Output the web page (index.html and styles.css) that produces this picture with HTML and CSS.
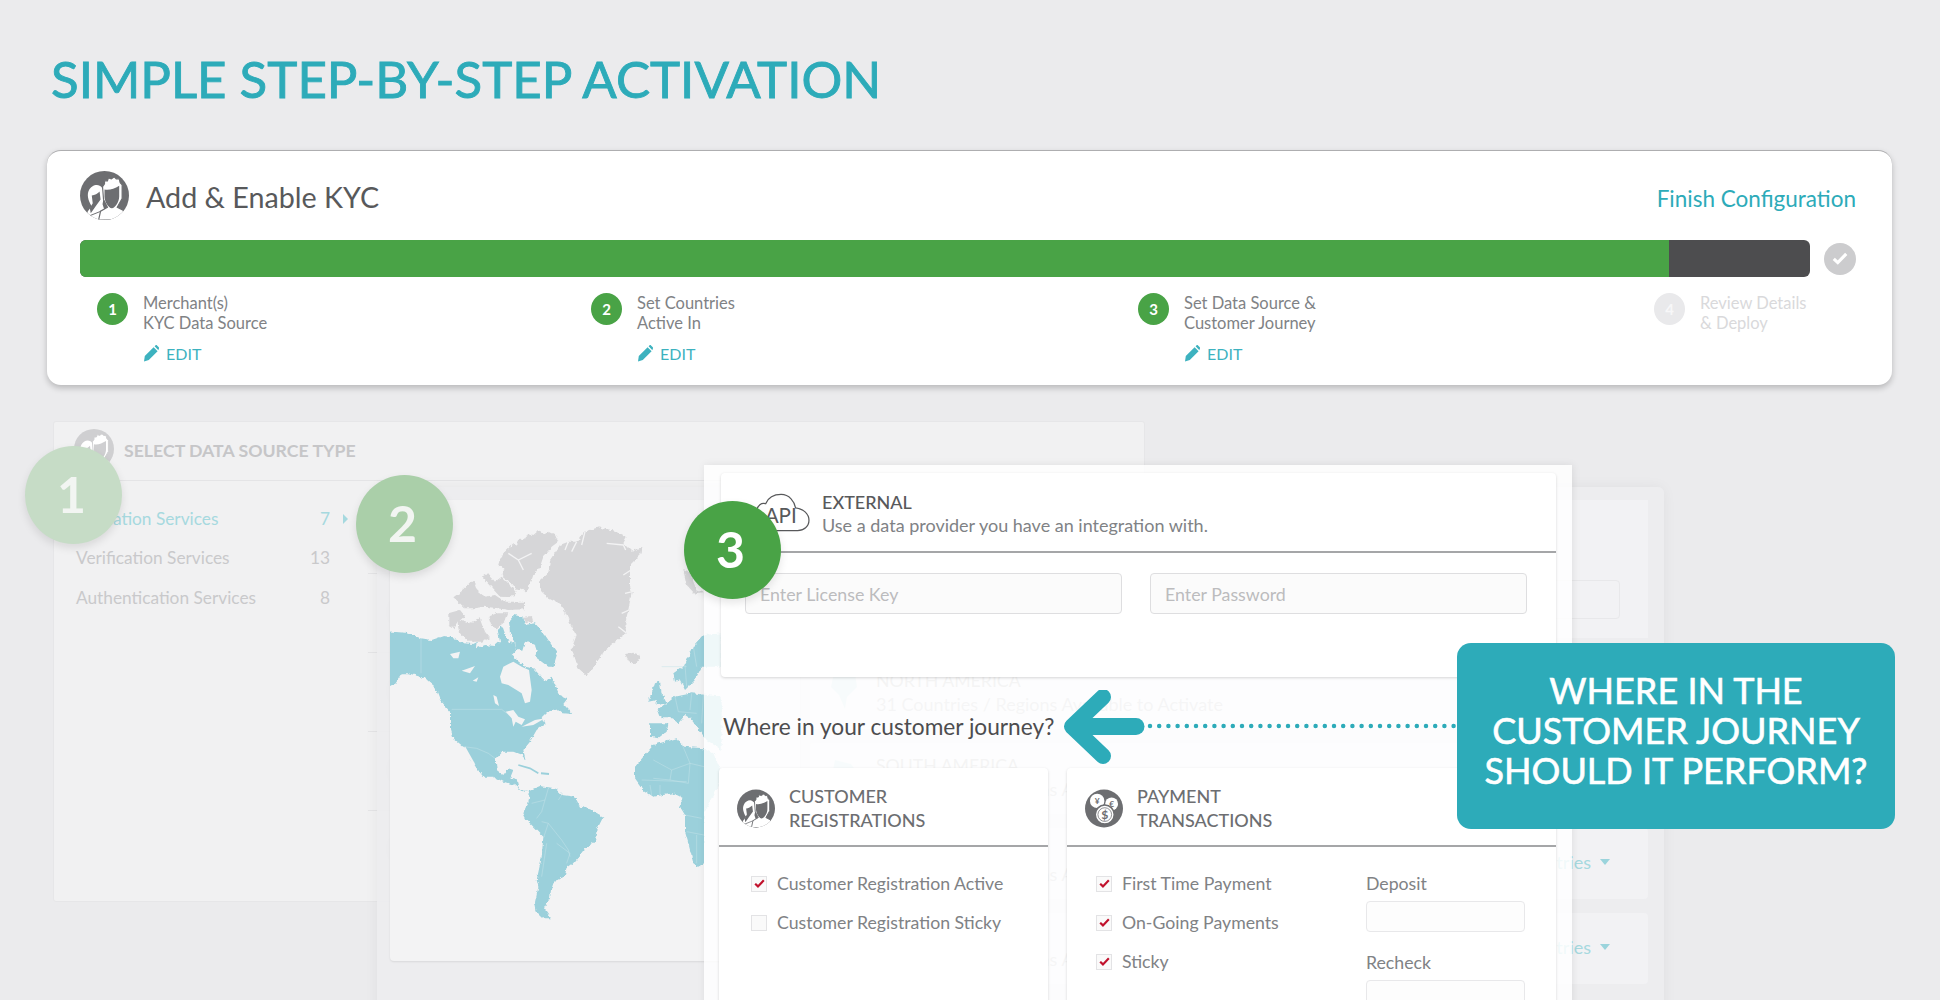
FILE: index.html
```html
<!DOCTYPE html>
<html lang="en">
<head>
<meta charset="utf-8">
<title>Simple Step-by-Step Activation</title>
<link rel="stylesheet" href="styles.css">
</head>
<body>
<svg class="defs" width="0" height="0" aria-hidden="true">
  <defs>
    <clipPath id="disc"><circle cx="25" cy="25" r="25"/></clipPath>
    <filter id="rough" x="-5%" y="-5%" width="110%" height="110%">
      <feTurbulence type="fractalNoise" baseFrequency=".07" numOctaves="3" seed="4"/>
      <feDisplacementMap in="SourceGraphic" scale="13" xChannelSelector="R" yChannelSelector="G"/>
    </filter>
    <symbol id="people" viewBox="0 0 50 50">
      <circle cx="25" cy="25" r="25" fill="currentColor"/>
      <g clip-path="url(#disc)">
        <path fill="#fff" d="M5 50 L8 41 L12 36 C8 30 7 24 9 20 C11 15 17 13 20 15 C24 17 25 22 24 28 L23 34 L25 40 L26 50 Z"/>
        <path fill="currentColor" d="M12 25 C15 25 18 23 20 21 L21 29 L16 36 L11 43 L10 38 L13 33 Z"/>
        <path fill="none" stroke="currentColor" stroke-width="1" d="M9 46 L24 40"/>
        <path fill="#fff" stroke="currentColor" stroke-width="1.200" d="M19 50 L21 41 L28 37 L24 29 L23 16 L25 13 L25 10 L28 10 L29 7 L32 8 L35 6 L37 8 L40 8 L41 12 L43 14 L43 28 L38 37 L44 40 L47 50 Z"/>
        <path fill="currentColor" d="M25 19 C30 20 35 18 40 15 L40 26 C40 31 36 38 32.500 38 C29 38 25 31 25 26 Z"/>
      </g>
    </symbol>
    <symbol id="coins" viewBox="0 0 50 50">
      <circle cx="25" cy="25" r="25" fill="currentColor"/>
      <circle cx="16" cy="15" r="9.500" fill="#fff"/>
      <circle cx="35" cy="19" r="8.500" fill="#fff"/>
      <circle cx="26" cy="33" r="12.500" fill="#fff" stroke="currentColor" stroke-width="2"/>
      <circle cx="26" cy="33" r="9" fill="none" stroke="currentColor" stroke-width="1"/>
      <text class="coin-small" x="16" y="19">¥</text>
      <text class="coin-small" x="35" y="23">€</text>
      <text class="coin-big" x="26" y="38.500">$</text>
    </symbol>
    <symbol id="pencil" viewBox="0 0 16 17">
      <path d="M1 16.500 L1.800 11 L10.600 2.200 L14.600 6.200 L5.800 15 Z M11.600 1.200 L12.400 .4 C13 0 13.600 0 14 .4 L15.800 2.200 C16.200 2.800 16.200 3.400 15.800 3.800 L15.400 5.200 Z" fill="currentColor"/>
    </symbol>
    <symbol id="tick" viewBox="0 0 12 10">
      <path d="M1.200 5.200 L4.300 8.200 L10.800 1.400" fill="none" stroke="currentColor" stroke-width="2.400"/>
    </symbol>
  </defs>
</svg>

<main class="page">
  <h1 class="page-title">SIMPLE STEP-BY-STEP ACTIVATION</h1>

  <section class="enable-card">
    <header class="enable-head">
      <svg class="icon-lg"><use href="#people"/></svg>
      <h2 class="enable-title">Add &amp; Enable KYC</h2>
      <a class="finish-link">Finish Configuration</a>
    </header>
    <div class="progress-row">
      <div class="progress">
        <div class="progress-done"></div>
      </div>
      <span class="progress-check"><svg class="progress-tick"><use href="#tick"/></svg></span>
    </div>
    <ol class="steps">
      <li class="step">
        <span class="step-num">1</span>
        <div class="step-text">
          <p class="step-label">Merchant(s)<br>KYC Data Source</p>
          <a class="step-edit"><svg class="pencil"><use href="#pencil"/></svg>EDIT</a>
        </div>
      </li>
      <li class="step">
        <span class="step-num">2</span>
        <div class="step-text">
          <p class="step-label">Set Countries<br>Active In</p>
          <a class="step-edit"><svg class="pencil"><use href="#pencil"/></svg>EDIT</a>
        </div>
      </li>
      <li class="step">
        <span class="step-num">3</span>
        <div class="step-text">
          <p class="step-label">Set Data Source &amp;<br>Customer Journey</p>
          <a class="step-edit"><svg class="pencil"><use href="#pencil"/></svg>EDIT</a>
        </div>
      </li>
      <li class="step step-off">
        <span class="step-num">4</span>
        <div class="step-text">
          <p class="step-label">Review Details<br>&amp; Deploy</p>
        </div>
      </li>
    </ol>
  </section>

  <section class="window window-one">
    <header class="one-head">
      <svg class="icon-faint"><use href="#people"/></svg>
      <h3 class="one-title">SELECT DATA SOURCE TYPE</h3>
    </header>
    <div class="one-body">
      <ul class="source-list">
        <li class="source source-on"><span>Validation Services</span><span class="source-count">7</span><i class="source-arrow"></i></li>
        <li class="source"><span>Verification Services</span><span class="source-count">13</span></li>
        <li class="source"><span>Authentication Services</span><span class="source-count">8</span></li>
      </ul>
      <ul class="ghost-list">
        <li class="ghost-row"><i class="ghost-disc"></i></li>
        <li class="ghost-row"><i class="ghost-disc"></i></li>
        <li class="ghost-row"><i class="ghost-disc"></i></li>
        <li class="ghost-row"><i class="ghost-disc"></i></li>
      </ul>
    </div>
  </section>

  <section class="window window-two">
    <div class="map-card">
      <svg class="map" viewBox="15 -30 1230 1383" width="410" height="461" aria-hidden="true">
        <g class="land-grey">
          <path d="M462 215 L490 190 L495 150 L525 105 L550 95 L575 95 L600 65 L640 52 L690 62 L725 80 L715 100 L740 125 L772 110 L770 130 L735 165 L735 230 L740 245 L730 300 L720 340 L725 370 L690 395 L660 420 L630 465 L605 497 L580 475 L560 415 L575 375 L555 340 L530 285 L490 265 L465 240 Z"/>
          <path d="M365 120 L385 100 L395 105 L405 85 L420 90 L430 70 L445 75 L460 62 L475 70 L490 65 L510 75 L520 95 L500 110 L490 125 L475 140 L465 170 L445 195 L440 210 L430 225 L425 250 L410 235 L395 240 L385 225 L375 215 L360 205 L350 195 L355 175 L340 165 L345 145 L355 130 Z"/>
          <path d="M290 200 L310 190 L330 215 L350 200 L375 225 L395 245 L380 262 L345 260 Z"/>
          <path d="M205 262 L235 240 L265 210 L275 240 L300 260 L330 255 L360 275 L420 275 L420 298 L370 300 L340 295 L300 290 L270 295 L240 295 L220 275 Z"/>
          <path d="M220 330 L250 340 L285 325 L300 365 L315 385 L290 395 L250 395 L225 370 Z"/>
          <path d="M190 310 L225 300 L240 318 L215 340 L205 355 L190 345 Z"/>
          <path d="M310 320 L335 310 L370 310 L360 335 L335 355 L318 345 Z"/>
          <path d="M415 320 L440 318 L445 335 L422 340 Z"/>
          <path d="M720 432 L745 428 L768 435 L755 458 L735 460 Z"/>
          <path d="M895 180 L915 190 L935 240 L957 250 L930 252 L905 225 Z"/>
        </g>
        <path class="fjord" d="M370 130 L400 150 L440 130 M400 150 L415 180 M550 95 L540 120 M575 95 L560 125 M600 65 L590 105 M665 100 L715 105 L722 120 M738 180 L715 195 M742 245 L720 250 M732 300 L710 310 M725 370 L700 350"/>
        <g class="land-teal">
          <path d="M-15 362 L60 368 L108 385 L140 390 L175 378 L205 382 L235 400 L265 402 L278 395 L276 415 L300 405 L330 408 L345 395 L338 360 L352 348 L365 385 L372 400 L388 395 L395 420 L380 435 L395 450 L420 470 L445 475 L480 512 L500 500 L525 555 L548 565 L535 582 L562 612 L535 610 L520 598 L490 605 L470 625 L482 640 L455 660 L435 695 L415 720 L422 750 L410 735 L385 725 L350 725 L332 745 L335 780 L355 795 L370 775 L385 780 L375 805 L395 810 L400 830 L420 845 L435 840 L465 828 L510 835 L530 855 L570 860 L585 890 L615 898 L655 920 L635 960 L630 995 L600 1015 L585 1035 L565 1060 L545 1075 L540 1095 L507 1115 L498 1140 L495 1165 L477 1195 L498 1225 L475 1225 L455 1205 L450 1180 L460 1130 L455 1110 L470 1040 L475 980 L425 930 L415 910 L430 880 L435 840 L415 845 L390 825 L355 815 L325 800 L295 800 L275 775 L255 745 L235 710 L205 685 L195 650 L195 605 L165 570 L150 530 L120 505 L70 490 L50 490 L30 520 L-15 545 Z"/>
          <path d="M372 330 L385 315 L415 320 L420 345 L450 340 L480 375 L500 405 L517 430 L505 470 L490 470 L450 440 L455 420 L440 400 L420 395 L412 422 L395 420 L390 400 L375 370 Z"/>
          <path d="M865 490 L900 465 L925 410 L957 375 L1010 370 L1010 470 L950 470 L930 510 L900 540 L885 510 L870 515 Z"/>
          <path d="M810 520 L825 515 L830 550 L845 580 L815 585 L815 570 L790 575 L800 550 Z"/>
          <path d="M820 600 L870 560 L920 550 L1010 560 L1010 720 L965 690 L935 650 L915 625 L900 615 L880 640 L860 625 L830 625 Z"/>
          <path d="M795 640 L850 640 L845 665 L820 685 L795 680 Z"/>
          <path d="M750 770 L775 740 L805 705 L875 685 L895 710 L957 715 L985 730 L1015 800 L985 860 L957 910 L957 1060 L940 1070 L925 1060 L910 1000 L900 965 L900 915 L885 890 L895 865 L865 850 L805 860 L775 840 L750 805 Z"/>
        </g>
        <path class="islands" d="M400 765 L435 775 L460 790"/>
        <path class="islands islands-thin" d="M468 790 L492 792"/>
        <g class="water">
          <path d="M345 500 L355 470 L385 455 L410 470 L432 480 L440 540 L435 575 L420 580 L410 550 L370 525 L350 520 Z"/>
          <circle cx="443" cy="410" r="8"/>
          <path d="M362 605 L385 600 L400 620 L420 628 L410 645 L392 635 L385 650 L380 625 Z"/>
          <path d="M195 432 L225 425 L220 445 L205 445 Z M230 482 L270 468 L255 490 Z M263 512 L280 502 L275 515 Z M325 555 L335 560 L342 588 L330 580 Z"/>
          <path d="M410 650 L450 630 L480 625 L445 645 Z"/>
        </g>
        <path class="border-lines" d="M200 598 L350 598 L365 610 M108 385 L108 490 M235 710 L275 715 L310 730 L330 745 M490 835 L480 870 L440 880 M480 870 L470 905 L455 925 M470 935 L490 940 L530 990 L550 1020 L555 1040 M530 855 L520 870 M475 985 L490 940 M485 1000 L470 1100 M515 1000 L555 1030 L545 1060 M805 750 L860 780 L855 810 L805 805 M860 780 L915 760 L957 770 M915 760 L890 700 M855 810 L910 820 L915 760 M770 810 L905 815 M795 825 L800 855 M825 825 L825 855 M900 915 L950 925 M905 965 L957 975 M935 975 L935 1060 M870 560 L880 605 L935 610 M920 550 L915 600 M955 555 L950 640 M830 470 L905 470 M900 465 L905 530 M925 410 L935 470"/>
        <path class="gulf" d="M238 712 L268 765"/>
      </svg>
    </div>
    <div class="regions">
      <div class="region-top"><span class="region-field"></span></div>
      <div class="region">
        <svg class="region-map" viewBox="0 0 30 40"><path d="M4 6 L26 2 L28 16 L18 26 L16 38 L10 24 L2 16 Z"/></svg>
        <div class="region-text"><p class="region-name">NORTH AMERICA</p><p class="region-desc">31 Countries / Regions Available to Activate</p></div>
        <span class="region-action">View Countries<i class="caret"></i></span>
      </div>
      <div class="region">
        <svg class="region-map" viewBox="0 0 30 40"><path d="M6 4 L22 8 L28 16 L18 28 L14 38 L12 24 L4 14 Z"/></svg>
        <div class="region-text"><p class="region-name">SOUTH AMERICA</p><p class="region-desc">13 Countries / Regions Available to Activate</p></div>
        <span class="region-action">View Countries<i class="caret"></i></span>
      </div>
      <div class="region">
        <svg class="region-map" viewBox="0 0 30 40"><path d="M6 6 L24 4 L28 16 L16 22 L10 36 L4 20 Z"/></svg>
        <div class="region-text"><p class="region-name">EUROPE</p><p class="region-desc">44 Countries / Regions Available to Activate</p></div>
        <span class="region-action">View Countries<i class="caret"></i></span>
      </div>
      <div class="region">
        <svg class="region-map" viewBox="0 0 30 40"><path d="M4 8 L22 4 L28 18 L20 36 L14 24 L4 18 Z"/></svg>
        <div class="region-text"><p class="region-name">AFRICA</p><p class="region-desc">54 Countries / Regions Available to Activate</p></div>
        <span class="region-action">View Countries<i class="caret"></i></span>
      </div>
    </div>
  </section>

  <section class="window window-three">
    <div class="white-card external">
      <header class="external-head">
        <svg class="cloud" viewBox="0 0 64 38" aria-hidden="true">
          <path d="M12 36 C4 36 1 30 2 25 C3 19 8 17 12 18 C13 11 17 9 21 10 C24 3 30 1 36 1 C44 1 49 8 50 14 C58 15 63 20 63 26 C63 32 58 36 52 36 Z"/>
          <text class="cloud-text" x="20" y="29">API</text>
        </svg>
        <div>
          <h4 class="external-title">EXTERNAL</h4>
          <p class="external-desc">Use a data provider you have an integration with.</p>
        </div>
      </header>
      <form class="external-form">
        <input class="text-field" type="text" placeholder="Enter License Key">
        <input class="text-field" type="text" placeholder="Enter Password">
      </form>
    </div>

    <p class="journey-question">Where in your customer journey?</p>

    <div class="journey-grid">
      <div class="white-card journey-card">
        <header class="journey-head">
          <svg class="icon-md"><use href="#people"/></svg>
          <h4 class="journey-title">CUSTOMER<br>REGISTRATIONS</h4>
        </header>
        <ul class="check-list check-list-one">
          <li class="check-row"><span class="check-box"><svg class="check-mark"><use href="#tick"/></svg></span>Customer Registration Active</li>
          <li class="check-row"><span class="check-box"></span>Customer Registration Sticky</li>
        </ul>
      </div>
      <div class="white-card journey-card">
        <header class="journey-head">
          <svg class="icon-md"><use href="#coins"/></svg>
          <h4 class="journey-title">PAYMENT<br>TRANSACTIONS</h4>
        </header>
        <div class="payment-body">
          <ul class="check-list">
            <li class="check-row"><span class="check-box"><svg class="check-mark"><use href="#tick"/></svg></span>First Time Payment</li>
            <li class="check-row"><span class="check-box"><svg class="check-mark"><use href="#tick"/></svg></span>On-Going Payments</li>
            <li class="check-row"><span class="check-box"><svg class="check-mark"><use href="#tick"/></svg></span>Sticky</li>
          </ul>
          <div class="payment-fields">
            <label class="field-label">Deposit</label>
            <span class="small-field"></span>
            <label class="field-label field-label-next">Recheck</label>
            <span class="small-field"></span>
          </div>
        </div>
      </div>
    </div>
  </section>

  <span class="badge badge-one">1</span>
  <span class="badge badge-two">2</span>
  <span class="badge badge-three">3</span>

  <svg class="pointer" viewBox="0 0 400 76" width="400" height="76" aria-hidden="true">
    <path class="pointer-head" d="M43 7 L12 36.500 L43 66"/>
    <path class="pointer-shaft" d="M16 36.500 L76 36.500"/>
    <path class="pointer-dots" d="M90 36 L396 36"/>
  </svg>

  <aside class="callout">WHERE IN THE<br>CUSTOMER JOURNEY<br>SHOULD IT PERFORM?</aside>
</main>
</body>
</html>
```

FILE: styles.css
```css
* { box-sizing: border-box; }

html, body {
  margin: 0;
  padding: 0;
  background: #ebebed;
}

body {
  font-family: Lato, "Open Sans", sans-serif;
  color: #808285;
  overflow: hidden;
}

p, h1, h2, h3, h4, ul, ol { margin: 0; padding: 0; }
ul, ol { list-style: none; }
a { color: inherit; }

.defs { position: absolute; }

.page {
  position: relative;
  width: 1940px;
  height: 1000px;
  overflow: hidden;
}

.page-title {
  padding: 47px 0 0 51px;
  height: 150px;
  font-size: 51px;
  line-height: 64px;
  font-weight: 400;
  color: #2dabb9;
  -webkit-text-stroke: .9px #2dabb9;
}

/* Top card */
.enable-card {
  position: relative;
  z-index: 5;
  margin-left: 47px;
  width: 1845px;
  height: 235px;
  padding: 20px 36px 0 33px;
  background: #fff;
  border-top: 1px solid #aeaeb0;
  border-radius: 14px;
  box-shadow: 0 3px 6px rgba(0, 0, 0, .22);
}

.enable-head {
  display: flex;
  align-items: center;
  height: 48px;
  gap: 17px;
}

.icon-lg { width: 49px; height: 49px; color: #6d6e71; flex: none; }

.enable-title {
  margin-top: 4px;
  font-size: 28.700px;
  font-weight: 400;
  color: #58595b;
}

.finish-link {
  margin-left: auto;
  margin-top: 6px;
  font-size: 22.500px;
  color: #2dabb9;
}

.progress-row {
  display: flex;
  align-items: center;
  gap: 14px;
  margin-top: 21px;
}

.progress {
  width: 1735px;
  height: 37px;
  background: #4d4d4f;
  border-radius: 6px;
  overflow: hidden;
}

.progress-done {
  width: 1589px;
  height: 100%;
  background: #49a346;
}

.progress-check {
  display: flex;
  align-items: center;
  justify-content: center;
  width: 32px;
  height: 32px;
  border-radius: 50%;
  background: #ccccce;
  color: #fff;
}

.progress-tick { width: 16px; height: 13px; }

.steps {
  display: grid;
  grid-template-columns: 494px 547px 516px 1fr;
  margin-top: 16px;
  padding-left: 17px;
}

.step { display: flex; gap: 15px; }

.step-num {
  flex: none;
  display: flex;
  align-items: center;
  justify-content: center;
  width: 31px;
  height: 32px;
  border-radius: 50%;
  background: #49a346;
  color: #fff;
  font-size: 15px;
  font-weight: 700;
}

.step-label {
  font-size: 16.500px;
  line-height: 20px;
  color: #808285;
}

.step-edit {
  display: flex;
  align-items: center;
  gap: 7px;
  margin-top: 10px;
  height: 20px;
  font-size: 16px;
  color: #3db2bf;
}

.pencil { width: 16px; height: 17px; }

.step-off .step-num { background: #e9e9eb; color: #f7f7f8; }
.step-off .step-label { color: #d9d9db; }

/* Layered windows, placed on the page like windows on a desktop */
.window { position: absolute; }

.window-one {
  z-index: 1;
  left: 53px;
  top: 421px;
  width: 1092px;
  height: 481px;
  background: #f1f1f2;
  border: 1px solid #e6e6e8;
  border-radius: 3px;
}

.one-head {
  display: flex;
  align-items: center;
  gap: 10px;
  height: 59px;
  padding: 0 0 0 20px;
  border-bottom: 1px solid #e4e4e6;
}

.icon-faint { width: 40px; height: 40px; color: #cfcfd1; margin-top: -4px; }

.one-title {
  margin-top: -2px;
  font-size: 17.700px;
  font-weight: 700;
  color: #c6c6c8;
}

.one-body {
  display: flex;
  padding-left: 22px;
}

.source-list {
  position: relative;
  width: 292px;
  padding-top: 18px;
}

.source {
  position: relative;
  display: flex;
  align-items: center;
  height: 39.300px;
  padding-right: 38px;
  font-size: 17.300px;
  color: #c9c9cb;
}

.source-count { margin-left: auto; width: 30px; text-align: right; }
.source-on { color: #a6d9df; }

.source-arrow {
  position: absolute;
  right: 20px;
  border-left: 5px solid #a6d9df;
  border-top: 5px solid transparent;
  border-bottom: 5px solid transparent;
}

.ghost-list {
  flex: 1;
  margin-top: 92px;
}

.ghost-row {
  height: 79px;
  padding: 18px 0 0 18px;
  border-top: 1px solid #e4e4e6;
}

.ghost-disc {
  display: block;
  width: 40px;
  height: 40px;
  border-radius: 50%;
  background: #dcdcde;
}

.window-two {
  z-index: 2;
  left: 377px;
  top: 487px;
  width: 1287px;
  height: 540px;
  display: flex;
  gap: 10px;
  padding: 13px 16px 0 13px;
  background: rgba(237, 237, 239, .92);
  border-radius: 6px;
  box-shadow: 0 0 14px rgba(0, 0, 0, .05);
}

.map-card {
  flex: none;
  width: 410px;
  height: 461px;
  background: #f3f3f4;
  border-radius: 4px;
  box-shadow: 0 1px 2px rgba(0, 0, 0, .09);
  overflow: hidden;
}

.map { display: block; }
.land-grey { fill: #d6d6d8; filter: url(#rough); }
.land-teal { fill: #9bd0db; filter: url(#rough); }
.water { fill: #f3f3f4; }

.fjord, .border-lines, .gulf {
  fill: none;
  stroke: #f3f3f4;
}
.fjord { stroke-width: 4; }
.border-lines { stroke-width: 1.500; stroke: #c5e3e9; }
.gulf { stroke-width: 7; }

.islands { fill: none; stroke: #9bd0db; stroke-width: 5; }
.islands-thin { stroke-width: 6; }

.regions {
  flex: 1;
  display: flex;
  flex-direction: column;
  gap: 14px;
}

.region-top {
  display: flex;
  align-items: flex-end;
  justify-content: flex-end;
  height: 144px;
  padding: 0 28px 25px 0;
  background: linear-gradient(#f2f2f4, #f2f2f4) top / 100% 138px no-repeat;
}

.region-field {
  display: block;
  width: 420px;
  height: 39px;
  border: 1px solid #e8e8ea;
  border-radius: 4px;
}

.region {
  display: flex;
  align-items: flex-start;
  height: 71px;
  padding: 13px 38px 0 19px;
  background: #f2f2f4;
  border-radius: 4px;
}

.region-map { width: 30px; height: 40px; fill: #cfe6ea; margin-right: 17px; flex: none; }
.region-name { font-size: 17.700px; line-height: 20px; color: #b8b8ba; }
.region-desc { font-size: 18px; line-height: 26px; color: #c2c2c4; }

.region-action {
  display: flex;
  align-items: center;
  gap: 9px;
  margin-left: auto;
  margin-top: 10px;
  font-size: 18px;
  color: #a6d9df;
}

.caret {
  border-top: 6px solid #9bd4dc;
  border-left: 5.500px solid transparent;
  border-right: 5.500px solid transparent;
}

.window-three {
  z-index: 3;
  left: 704px;
  top: 465px;
  width: 868px;
  height: 560px;
  padding: 8px 16px 0 17px;
  background: rgba(255, 255, 255, .84);
  box-shadow: 1px 0 8px rgba(0, 0, 0, .08);
}

.white-card {
  background: #fff;
  border-radius: 4px;
  box-shadow: 0 1px 3px rgba(0, 0, 0, .16);
}

.external { height: 204px; }

.external-head {
  display: flex;
  align-items: center;
  gap: 12px;
  height: 80px;
  padding: 0 0 0 23px;
  border-bottom: 2px solid #a5a6a8;
}

.cloud {
  flex: none;
  width: 66px;
  height: 40px;
  margin-top: 2px;
  fill: none;
  stroke: #58595b;
  stroke-width: 1.200;
  overflow: visible;
}

.cloud-text {
  font-size: 20px;
  font-weight: 400;
  fill: #58595b;
  stroke: none;
}

.external-head > div { margin-top: 3px; }

.external-title {
  font-size: 18px;
  line-height: 23px;
  font-weight: 500;
  color: #58595b;
}

.external-desc {
  font-size: 18px;
  line-height: 23px;
  color: #808285;
}

.external-form {
  display: flex;
  gap: 28px;
  padding: 20px 0 0 24px;
}

.text-field {
  width: 377px;
  height: 41px;
  padding: 0 14px;
  font: 17.800px Lato, sans-serif;
  background: #fbfbfb;
  border: 1px solid #dedee0;
  border-radius: 4px;
  color: #808285;
}

.text-field::placeholder { color: #bcbcbe; opacity: 1; }

.journey-question {
  height: 91px;
  padding: 36px 0 0 2px;
  font-size: 22.700px;
  line-height: 28px;
  color: #4d4d4f;
}

.journey-grid {
  display: grid;
  grid-template-columns: 329px 489px;
  gap: 19px;
  margin-left: -2px;
}

.journey-card { height: 300px; }

.journey-head {
  display: flex;
  align-items: flex-start;
  gap: 14px;
  height: 79px;
  padding: 17px 0 0 18px;
  border-bottom: 2px solid #a5a6a8;
}

.icon-md { width: 38px; height: 39px; color: #6d6e71; flex: none; margin-top: 4px; }

.journey-title {
  font-size: 18px;
  line-height: 23.500px;
  font-weight: 500;
  color: #6d6e71;
}

.check-list-one { padding: 17px 0 0 32px; }

.check-row {
  display: flex;
  align-items: center;
  gap: 10px;
  height: 39px;
  font-size: 17.700px;
  color: #808285;
}

.check-box {
  flex: none;
  display: flex;
  align-items: center;
  justify-content: center;
  width: 16px;
  height: 16px;
  background: #fafafa;
  border: 1px solid #e3e3e5;
  color: #c1122d;
}

.check-mark { width: 11px; height: 9px; }

.payment-body {
  display: grid;
  grid-template-columns: 270px 160px;
  padding: 17px 0 0 29px;
}

.field-label {
  display: block;
  margin-top: 10px;
  font-size: 17.700px;
  line-height: 20px;
  color: #808285;
}

.field-label-next { margin-top: 21px; }

.small-field {
  display: block;
  width: 159px;
  height: 31px;
  margin-top: 7px;
  background: #fdfdfd;
  border: 1px solid #e8e8ea;
  border-radius: 4px;
}

/* Numbered badges over the windows */
.badge {
  position: absolute;
  z-index: 4;
  display: flex;
  align-items: center;
  justify-content: center;
  width: 97px;
  height: 98px;
  padding: 0 4px 3px 0;
  border-radius: 50%;
  color: #fff;
  font-size: 50px;
  font-weight: 700;
  box-shadow: 0 4px 8px rgba(0, 0, 0, .1);
}

.badge-one { left: 25px; top: 446px; background: #c6dcc6; color: #f2f5f2; }
.badge-two { left: 356px; top: 475px; background: #aacfa9; color: #f2f5f2; }
.badge-three { left: 684px; top: 501px; background: #49a346; }

/* Arrow and callout */
.pointer {
  position: absolute;
  z-index: 6;
  left: 1060px;
  top: 690px;
}

.pointer-head, .pointer-shaft, .pointer-dots {
  fill: none;
  stroke: #2dabb9;
  stroke-linecap: round;
  stroke-linejoin: round;
}

.pointer-head { stroke-width: 16; }
.pointer-shaft { stroke-width: 17; }
.pointer-dots { stroke-width: 4.500; stroke-dasharray: 0 9.200; }

.callout {
  position: absolute;
  z-index: 6;
  left: 1457px;
  top: 643px;
  width: 438px;
  height: 186px;
  display: flex;
  align-items: center;
  justify-content: center;
  padding-bottom: 12px;
  text-align: center;
  background: #2dabb9;
  border-radius: 14px;
  color: #fff;
  font-size: 36px;
  line-height: 40px;
  font-weight: 400;
  -webkit-text-stroke: .6px #fff;
}

.coin-small, .coin-big {
  font-family: Lato, sans-serif;
  font-weight: 700;
  text-anchor: middle;
  fill: #6d6e71;
}
.coin-small { font-size: 11px; }
.coin-big { font-size: 16px; }
```
